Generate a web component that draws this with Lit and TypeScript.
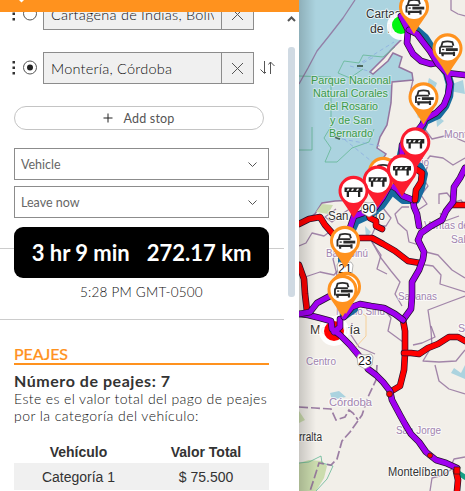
import { LitElement, html, svg, css } from "lit";
import { customElement } from "lit/decorators.js";

const PURPLE = "#a000f0";
const RED = "#ff0000";

const borders = [
  "M355 0L343 18L329 36L317 51L308 68L299 84",
  "M413 80L410 93L418 94M430 118L424 128L432 139L449 135L465 142",
  "M451 0V10L458 14L465 16",
  "M424 164L430 156L443 158L453 165L465 158",
  "M428 165L423 178L428 186L421 195L427 204L418 210",
  "M409 207L402 207L395 214L398 223L407 231L409 242L419 245",
  "M439 204L439 194L447 193L454 202L461 200L465 206M440 213L445 221L459 216",
  "M386 178L390 193L383 208L391 218L386 226L376 226L370 239L381 255L377 269L387 274",
  "M336 209L325 217L332 222L342 214L354 206",
  "M299 246L306 243L312 233L324 236L332 230M305 277L320 272L334 275L340 268",
  "M372 242L381 258L391 271L400 282L395 294L402 306",
  "M422 251L438 255L452 270L465 278M419 264L433 266L441 275L440 284L465 292",
  "M465 296L449 302L428 310L431 330L432 346L423 361L439 362L456 361L465 350",
  "M413 345L422 343L435 337L431 326",
  "M381 305L391 318L388 331L403 342M352 323L351 335L359 347L375 354",
  "M343 240L333 259L337 275L330 294M327 318L322 331L329 337",
  "M435 365L439 381L449 389L465 394",
  "M451 466L454 459L465 457M452 469L443 475L432 478L430 491",
];

const countryBorders = [
  "M377 365L376 380L368 397L362 415L350 432L342 441L337 459L331 465L319 463L314 479L310 491",
  "M299 407L315 408L331 409L336 420L345 417L349 410L353 413L358 420",
];

interface Road { d: string; c: string; }
const roads: Road[] = [
  { d: "M299 224L309 219L320 217L325 225L333 234L343 239L360 238L372 238L383 244L395 251L408 261L420 263", c: RED },
  { d: "M299 265L304 279L305 294L307 311", c: RED },
  { d: "M368 212L370 218L376 221L376 226L382 229", c: RED },
  { d: "M452 205L465 205", c: RED },
  { d: "M403 320L405 331L405 353L404 370L400 386L390 392", c: RED },
  { d: "M404 353L411 353L419 354L428 348L438 344L449 337L458 337L465 341", c: RED },
  { d: "M456 471L458 480L457 491", c: RED },
  { d: "M465 168L460 178L454 187L453 202L446 211L442 220L431 226L421 233L418 240L424 252L423 259L419 270L412 282L412 297L411 309L403 320", c: PURPLE },
  { d: "M413 199L414 207L417 214L419 226", c: PURPLE },
  { d: "M299 314L308 315L320 318L331 321L332 329L340 335L350 345L360 357M340 319L340 327L334 332", c: PURPLE },
  { d: "M299 314L310 312L317 303L330 296M344 317L352 307L360 304L371 306L384 308L395 314L403 320", c: PURPLE },
  { d: "M368 369L376 375L383 382L390 391L392 400L400 415L405 424L411 434L419 442L426 452L436 460L446 463L457 468", c: PURPLE },
  { d: "M401 16L408 30L407 43L413 54L421 61L431 64L436 63", c: PURPLE },
  { d: "M409 30L417 34L423 42L430 51L438 64L447 73L465 75M447 73L450 84L448 95L444 105L436 113L425 119L423 124L413 136L402 145L402 160", c: PURPLE },
  { d: "M392 186L397 189L403 196L413 200", c: PURPLE },
  { d: "M388 188L383 197L375 208L363 213L354 216L350 228", c: PURPLE },
  { d: "M416 169L422 173L421 182L416 190L415 200", c: RED },
];

const car = svg`<g fill="none" stroke="#2b2b2b" stroke-linejoin="round" transform="scale(1.08)">
  <path d="M-5.800 -1.800L-4.500 -6Q0 -7.300 4.500 -6L5.500 -2.500" stroke-width="1.700" />
  <path d="M-7 5V0Q-7 -1.800 -5 -1.800H5" stroke-width="1.700" />
  <path d="M-6 4.500H7M-4.500 4.500V7.200M6 3V7" stroke-width="2" />
  <path d="M-5 1H-3" stroke-width="1.200" /><path d="M-1.500 1H9.500" stroke-width="2.600" /></g>`;
const toll = svg`<path d="M-9 -3.500H9V1H6.800V6H4.500V1H-4.500V6H-6.800V1H-9Z" fill="#222" />
  <path d="M-6 -2.300H-4L-5 -.2H-7ZM-1.500 -2.300H.5L-.5 -.2H-2.500ZM3.500 -2.300H5.500L4.500 -.2H2.500Z" fill="#fff" />`;

const pin = (x: number, y: number, kind: "car" | "toll") => svg`
  <g transform="translate(${x} ${y})">
    <path d="M0 27L-5 19L-11.500 9.500A15 15 0 1 1 11.500 9.500L5 19Z" fill=${kind === "car" ? "#ff921e" : "#fc1c2e"} />
    <circle r="12" fill="#fff" />${kind === "car" ? car : toll}
  </g>`;

const label = (x: number, y: number, t: string, cls: string, w: number) =>
  svg`<text class=${cls} x=${x} y=${y} textLength=${w} lengthAdjust="spacingAndGlyphs">${t}</text>`;

const shield = (x: number, y: number, t: string) => svg`
  <path d="M${x - 6} ${y - 7}L${x} ${y - 6}L${x + 6} ${y - 7}L${x + 8} ${y - 4}L${x + 7} ${y + 4}L${x} ${y + 8}L${x - 7} ${y + 4}L${x - 8} ${y - 4}Z" fill="#fff" stroke="#999" stroke-width=".7" />
  <text class="num" x=${x} y=${y + 4}>${t}</text>`;

@customElement("route-map")
class RouteMap extends LitElement {
  static styles = css`
    :host { display: block; width: 166px; height: 491px; }
    svg { display: block; }
    text { font-family: "Liberation Sans", Arial, sans-serif; font-size: 11px; paint-order: stroke; stroke: #ffffffb0; stroke-width: 2px; stroke-linejoin: round; }
    .town { fill: #333; font-size: 12px; }
    .park { fill: #3b9a48; font-size: 10.5px; stroke: #e4f2ef99; }
    .area { fill: #a284b0; font-size: 10px; }
    .num { fill: #111; font-size: 12px; text-anchor: middle; stroke: none; }
  `;
  render() {
    return html`<svg width="166" height="491" viewBox="299 0 166 491">
      <defs><linearGradient id="shade"><stop offset="0" stop-color="#000" stop-opacity=".17" /><stop offset="1" stop-color="#000" stop-opacity="0" /></linearGradient></defs>
      <rect x="299" width="166" height="491" fill="#abd3df" />
      <path d="M402 0L400 25L401 40L391 50L384 58L370 72L373 74L388 61L393 53L402 57L399 67L412 73L413 80L392 82L391 103L387 125L380 137L377 148L386 154L379 165L362 181L355 200L335 201L322 203L315 214L299 224V491H465V0Z" fill="#f2efe9" />
      <path d="M402 0L400 25L401 40L391 50L384 58L370 72L373 74L388 61L393 53L402 57L399 67L412 73L413 80L392 82L391 103L387 125L380 137L377 148L386 154L379 165L362 181L355 200L335 201L322 203L315 214L299 224" fill="none" stroke="#9575a0" stroke-width="1.5" />
      <g fill="#cbdcae"><path d="M299 411L305 420L299 423ZM299 463L309 460L322 461L327 466L324 478L316 491H299ZM322 204L333 205L328 214L316 212Z" /></g>
      <g fill="#abd3df"><path d="M429 78L437 83L434 91L427 86ZM452 84L463 80L465 94L450 91ZM416 111L425 105L430 112L418 118ZM436 115L444 121L437 127ZM454 368L461 373L465 365V379L451 373ZM330 393L339 391L346 397L332 400ZM365 226L371 232L366 238Z" /></g>
      <g fill="none" stroke="#63b694" stroke-width=".8">
        <path d="M299 76L331 77L331 117M299 150H312V127M338 73L344 61L359 63L363 55L383 57L395 47M338 73L350 78L363 69M333 123L324 138L331 148L325 162H337L352 148L369 142L374 129M299 463L309 462L321 456L322 463L333 466L327 479L316 491" />
      </g>
      <g fill="none" stroke="#86a8df" stroke-width=".7" stroke-dasharray="4 3"><path d="M362 62L394 42M357 66L376 56M342 139L380 146M339 135L376 165M350 66L372 72" /></g>
      <path d="M357 66L363 66M335 137L340 139" stroke="#4a665a" stroke-width="2" />
      <g fill="none" stroke="#8d6a98" stroke-opacity=".8" stroke-width="1.3" stroke-linejoin="round">${borders.map((d) => svg`<path d=${d} />`)}</g>
      <g fill="none" stroke="#8d6a98" stroke-opacity=".85" stroke-width="1.7" stroke-dasharray="9 3">${countryBorders.map((d) => svg`<path d=${d} />`)}</g>
      <path d="M363 314L366 316L366 336L355 348" fill="none" stroke="#f6cf98" />

      ${label(311, 84, "Parque Nacional", "park", 80)}
      ${label(313, 97, "Natural Corales", "park", 75)}
      ${label(324, 110, "del Rosario", "park", 54)}
      ${label(330, 124, "y de San", "park", 42)}
      ${label(329, 137, "Bernardo", "park", 44)}
      ${label(444, 138, "Montes", "area", 34)}
      ${label(390, 166, "Toluviejo", "area", 39)}
      ${label(424, 229, "Ventas de", "area", 45)}
      ${label(451, 243, "Sabanas", "area", 40)}
      ${label(326, 257, "Bajo Sinú", "area", 42)}
      ${label(398, 300, "Sabanas", "area", 39)}
      ${label(336, 315, "Medio Sinú", "area", 49)}
      ${label(458, 332, "San", "area", 19)}
      ${label(306, 365, "Centro", "area", 30)}
      ${label(329, 406, "Córdoba", "area", 43)}
      ${label(396, 434, "San Jorge", "area", 45)}

      ${label(366, 18, "Cartagena", "town", 55)}
      ${label(370, 33, "de Indias", "town", 50)}
      <circle cx="401" cy="26" r="14" fill="#fff" opacity=".92" /><circle cx="401" cy="25" r="9" fill="#00f510" />
      ${label(328, 220, "San Antero", "town", 57)}
      ${label(310, 334, "Montería", "town", 50)}
      <circle cx="334" cy="331" r="15" fill="#fff" opacity=".92" /><circle cx="334" cy="331" r="10" fill="#ff0000" />

      <g fill="none" stroke="#176b9f" stroke-linejoin="round" stroke-linecap="round">
        <path stroke-width="8.500" d="M417 31L425 38L432 49L439 62L447 73L450 84L449 96L445 106L438 115L425 121L421 130L404 143L401 156" />
        <path stroke-width="8" d="M420 167L424 174L421 188L416 200L403 200L392 191L382 205L369 215L356 221L352 230M342 250V264M344 316L354 309" />
      </g>
      <path d="M457 472L466 478" stroke="#16a085" stroke-width="5" />
      ${roads.map((r) => svg`<path d=${r.d} fill="none" stroke="#25102e" stroke-width="6.6" stroke-linejoin="round" stroke-linecap="round" /><path d=${r.d} fill="none" stroke=${r.c} stroke-width="5.2" stroke-linejoin="round" stroke-linecap="round" />`)}
      <g fill="#f00" stroke="#222" stroke-width=".7"><circle cx="389.500" cy="394" r="3" /><circle cx="430" cy="455.500" r="2.500" /><path d="M454 467H460V474H454Z" /></g>

      ${label(388, 476, "Montelíbano", "town", 61)}
      ${label(299, 441, "rralta", "town", 23)}
      ${shield(369, 209, "90")}${shield(345, 269, "21")}${shield(365, 361, "23")}

      ${pin(414, 7, "car")}${pin(447.5, 48.5, "car")}${pin(423.5, 97.5, "car")}
      ${pin(383, 172, "car")}${pin(415.3, 142.5, "toll")}${pin(377.7, 180.7, "toll")}
      ${pin(402, 169.5, "toll")}${pin(353.5, 191, "toll")}
      ${pin(345, 241, "car")}${pin(346, 287, "car")}${pin(342.5, 290, "car")}
      <rect x="299" width="17" height="491" fill="url(#shade)" />
    </svg>`;
  }
}

@customElement("app-root")
class AppRoot extends LitElement {
  static styles = css`
    :host { display: flex; width: 465px; height: 491px; overflow: hidden; background: #fff; color: #111; font-family: Lato, "Open Sans", sans-serif; font-weight: 300; }
    * { box-sizing: border-box; }
    .side { width: 299px; height: 491px; display: flex; flex-direction: column; }
    .bar { height: 12px; flex: none; background: #ff921e; }
    .bar svg, .stop svg, .choice svg, .add svg, .track svg { display: block; }
    .body { display: flex; height: 479px; overflow: hidden; }
    .content { width: 284px; height: 479px; overflow: hidden; }
    .stop { display: flex; align-items: center; height: 32px; padding-left: 11px; }
    .first { margin-top: -14px; }
    .second { margin-top: 22px; }
    .mark { width: 32px; flex: none; }
    .field { display: flex; width: 211px; height: 32px; border: 1px solid #8c8c8c; background: #f0f0f0; }
    .value { width: 178px; padding: 0 7px; border-right: 1px solid #8c8c8c; font-size: 14.5px; line-height: 31px; white-space: nowrap; }
    .value span { display: block; overflow: hidden; }
    .v1, .v2 { letter-spacing: .22px; }
    .clear { width: 31px; display: grid; place-items: center; }
    .swap { margin-left: 6px; }
    .add { display: flex; align-items: center; justify-content: center; gap: 10px; width: 250px; height: 24px; margin: 22px 0 0 14px; border: 1px solid #c4c4c4; border-radius: 12px; font-size: 12.5px; letter-spacing: .2px; font-weight: 400; color: #555; }
    .choice { display: flex; align-items: center; justify-content: space-between; width: 255px; height: 32px; margin: 6px 0 0 14px; padding: 0 11px 0 6px; border: 1px solid #8c8c8c; font-size: 12.5px; letter-spacing: 0; font-weight: 400; color: #666; }
    .add + .choice { margin-top: 18px; }
    .summary { height: 93px; margin-top: 9px; background: linear-gradient(#ccc, #ccc) 0 21px / 100% 1px no-repeat; border-bottom: 1px solid #ccc; }
    .total { display: flex; justify-content: center; gap: 17px; width: 255px; height: 51px; margin-left: 14px; border-radius: 9px; background: #000; color: #fff; font-size: 22px; font-weight: 700; line-height: 51px; white-space: nowrap; }
    .time { width: 255px; margin-left: 14px; text-align: center; font-size: 13.5px; line-height: 29px; letter-spacing: .2px; }
    .tolls { width: 255px; margin-left: 14px; padding-top: 25px; }
    .title { height: 20px; border-bottom: 2px solid #ff921e; color: #ff921e; font-size: 16px; font-weight: 500; line-height: 17px; letter-spacing: -.1px; -webkit-text-stroke: .2px #ff921e; }
    .count { margin-top: 6px; color: #333; font-size: 16px; font-weight: 700; line-height: 19px; white-space: nowrap; letter-spacing: .55px; }
    .note { font-size: 14px; line-height: 17px; white-space: nowrap; }
    .n1 { letter-spacing: .4px; } .n2 { letter-spacing: .44px; }
    .table { margin-top: 14px; font-family: "Liberation Sans", Arial, sans-serif; font-size: 14px; font-weight: 400; color: #333; }
    .row { display: grid; grid-template-columns: 129px 126px; height: 27px; line-height: 28px; text-align: center; }
    .head { height: 25px; font-weight: 700; }
    .data { background: #f0f0f0; }
    .track { width: 15px; padding: 4px 0 0 3px; }
    .thumb { width: 7px; height: 250px; margin: 25px 0 0 1px; border-radius: 3px; background: #d0dae3; }
  `;
  private mark(on: boolean) {
    return svg`<svg class="mark" width="32" height="18" viewBox="0 0 32 18"><path d="M1.500 2h2.500v2.500h-2.500zM1.500 7.500h2.500v2.500h-2.500zM1.500 13h2.500v2.500h-2.500z" fill="#333" /><circle cx="19" cy="8.500" r="6.500" fill="none" stroke="#555" /><circle cx="19" cy="8.500" r=${on ? 3 : 0} fill="#222" /></svg>`;
  }
  private cross() {
    return svg`<svg width="13" height="13" viewBox="0 0 13 13"><path d="M1 1L12 12M12 1L1 12" stroke="#555" /></svg>`;
  }
  private chevron() {
    return svg`<svg width="9" height="7" viewBox="0 0 9 7"><path d="M.5 1.500L4.500 5.500L8.500 1.500" fill="none" stroke="#555" /></svg>`;
  }
  render() {
    return html`
      <div class="side">
        <div class="bar"><svg width="40" height="3"><path d="M19 0H24L21.500 2.500Z" fill="#fff" /></svg></div>
        <div class="body">
          <div class="content">
            <div class="stop first">${this.mark(false)}<div class="field"><div class="value v1"><span>Cartagena de Indias, Bolívar</span></div><div class="clear">${this.cross()}</div></div></div>
            <div class="stop second">${this.mark(true)}<div class="field"><div class="value v2">Montería, Córdoba</div><div class="clear">${this.cross()}</div></div>
              <svg class="swap" width="16" height="14" viewBox="0 0 16 14"><path d="M4.500 0V12M.5 8.500L4.500 12.500L6 11M10.500 13V1M8.500 3.500L10.500 1L14.500 5" fill="none" stroke="#555" /></svg>
            </div>
            <div class="add"><svg width="10" height="10" viewBox="0 0 10 10"><path d="M5 .5V9.500M.5 5H9.500" stroke="#222" /></svg><span>Add stop</span></div>
            <div class="choice"><span>Vehicle</span>${this.chevron()}</div>
            <div class="choice"><span>Leave now</span>${this.chevron()}</div>
            <div class="summary">
              <div class="total"><span>3 hr 9 min</span><span>272.17 km</span></div>
              <div class="time">5:28 PM GMT-0500</div>
            </div>
            <div class="tolls">
              <div class="title">PEAJES</div>
              <div class="count">Número de peajes: 7</div>
              <div class="note n1">Este es el valor total del pago de peajes</div>
              <div class="note n2">por la categoría del vehículo:</div>
              <div class="table">
                <div class="row head"><span>Vehículo</span><span>Valor Total</span></div>
                <div class="row data"><span>Categoría 1</span><span>$ 75.500</span></div>
              </div>
            </div>
          </div>
          <div class="track"><svg width="9" height="6" viewBox="0 0 9 6"><path d="M1 5L4.500 1.500L8 5" fill="none" stroke="#555" stroke-width="2" /></svg><div class="thumb"></div></div>
        </div>
      </div>
      <route-map></route-map>`;
  }
}
